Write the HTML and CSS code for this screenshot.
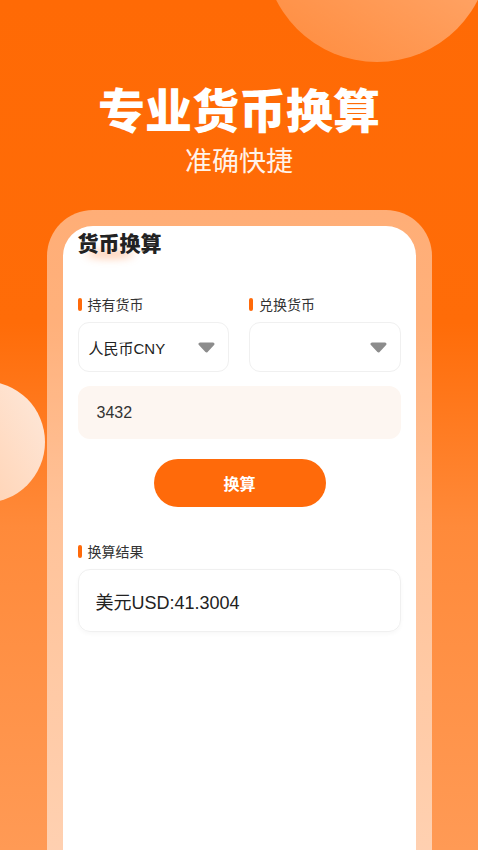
FILE: index.html
```html
<!DOCTYPE html>
<html lang="zh-CN">
<head>
<meta charset="utf-8">
<title>专业货币换算</title>
<link rel="stylesheet" href="styles.css">
</head>
<body>
<div class="page">
  <div class="bubble bubble-top"></div>
  <div class="bubble bubble-left"></div>

  <header class="hero">
    <h1 class="hero-title">专业货币换算</h1>
    <p class="hero-sub">准确快捷</p>
  </header>

  <section class="frame">
    <div class="card">
      <h2 class="card-title">货币换算</h2>

      <div class="pick-row">
        <div class="pick">
          <div class="label"><span class="bar"></span>持有货币</div>
          <div class="select">
            <span class="select-text">人民币CNY</span>
            <svg class="caret" width="17" height="11" viewBox="0 0 17 11"><path d="M2 2 L15 2 L8.5 9 Z" fill="#8c8c8c" stroke="#8c8c8c" stroke-width="3" stroke-linejoin="round"/></svg>
          </div>
        </div>
        <div class="pick">
          <div class="label"><span class="bar"></span>兑换货币</div>
          <div class="select">
            <span class="select-text"></span>
            <svg class="caret" width="17" height="11" viewBox="0 0 17 11"><path d="M2 2 L15 2 L8.5 9 Z" fill="#8c8c8c" stroke="#8c8c8c" stroke-width="3" stroke-linejoin="round"/></svg>
          </div>
        </div>
      </div>

      <div class="amount">3432</div>

      <div class="btn-wrap"><button class="btn">换算</button></div>

      <div class="label result-label"><span class="bar"></span>换算结果</div>
      <div class="result">美元USD:41.3004</div>
    </div>
  </section>
</div>
</body>
</html>
```

FILE: styles.css
```css
* { box-sizing: border-box; }
html, body { margin: 0; padding: 0; }
body {
  width: 478px;
  height: 850px;
  overflow: hidden;
  font-family: "Noto Sans CJK SC", "Noto Sans", sans-serif;
}
.page {
  position: relative;
  width: 478px;
  height: 850px;
  overflow: hidden;
  background: linear-gradient(180deg, #ff6a05 0%, #ff6c08 38%, #ff8a3a 62%, #ff9a55 100%);
}
.bubble {
  position: absolute;
  border-radius: 50%;
}
.bubble-top {
  width: 226px;
  height: 226px;
  left: 264px;
  top: -164px;
  background: linear-gradient(30deg, rgba(255,255,255,0.22) 0%, rgba(255,255,255,0.38) 55%, rgba(255,255,255,0.65) 100%);
}
.bubble-left {
  width: 122px;
  height: 122px;
  left: -77px;
  top: 381px;
  background: linear-gradient(60deg, #ffc9a3 0%, #ffdcc4 60%, #fde9dc 100%);
}
.hero {
  position: relative;
  text-align: center;
  padding-top: 82px;
  color: #fff;
}
.hero-title {
  margin: 0;
  font-size: 47px;
  line-height: 52px;
  font-weight: 900;
  letter-spacing: 0;
}
.hero-sub {
  margin: 9px 0 0;
  font-size: 27px;
  line-height: 34px;
  font-weight: 400;
  color: #fff3ea;
}
.frame {
  position: relative;
  margin: 33px auto 0;
  width: 385px;
  height: 700px;
  padding: 16px 16px 0;
  border-radius: 46px 46px 0 0;
  background: linear-gradient(180deg, rgba(255,255,255,0.45) 0%, rgba(255,255,255,0.5) 60%, rgba(255,255,255,0.55) 100%);
}
.card {
  height: 100%;
  background: #fff;
  border-radius: 30px 30px 0 0;
  padding: 4px 15px 0;
}
.card-title {
  position: relative;
  margin: 0;
  font-size: 21px;
  line-height: 24px;
  font-weight: 900;
  color: #222;
  z-index: 0;
}
.card-title::after {
  content: "";
  position: absolute;
  left: 8px;
  top: 20px;
  width: 48px;
  height: 8px;
  border-radius: 50%;
  background: rgba(255,120,40,0.4);
  filter: blur(4px);
  z-index: -1;
}
.pick-row {
  display: grid;
  grid-template-columns: 1fr 1fr;
  column-gap: 20px;
  margin-top: 42px;
}
.label {
  display: flex;
  align-items: center;
  font-size: 14px;
  line-height: 16px;
  color: #333;
}
.bar {
  width: 4px;
  height: 13px;
  border-radius: 2px;
  background: #ff6a0a;
  margin-right: 6px;
}
.select {
  margin-top: 10px;
  height: 50px;
  border: 1px solid #f0f0f0;
  border-radius: 11px;
  display: flex;
  align-items: center;
  justify-content: space-between;
  padding: 0 13px 0 10px;
}
.select-text {
  font-family: "Liberation Sans", "Noto Sans CJK SC", sans-serif;
  font-size: 15px;
  color: #222;
}
.caret { display: block; }
.amount {
  margin-top: 14px;
  height: 53px;
  border-radius: 12px;
  background: #fdf6f1;
  display: flex;
  align-items: center;
  padding-left: 19px;
  font-family: "Liberation Sans", "Noto Sans CJK SC", sans-serif;
  font-size: 16px;
  color: #333;
}
.btn-wrap {
  display: flex;
  justify-content: center;
  margin-top: 20px;
}
.btn {
  width: 172px;
  height: 48px;
  border: none;
  border-radius: 24px;
  background: #ff6a0a;
  color: #fff;
  font-family: "Noto Sans CJK SC", sans-serif;
  font-size: 16px;
  font-weight: 700;
  margin-left: 1px;
}
.result-label {
  margin-top: 36px;
}
.result {
  margin-top: 10px;
  height: 63px;
  border: 1px solid #f0f0f0;
  border-radius: 12px;
  box-shadow: 0 2px 4px rgba(0,0,0,0.03);
  display: flex;
  align-items: center;
  padding-left: 17px;
  font-family: "Liberation Sans", "Noto Sans CJK SC", sans-serif;
  font-size: 18px;
  color: #222;
}
```
